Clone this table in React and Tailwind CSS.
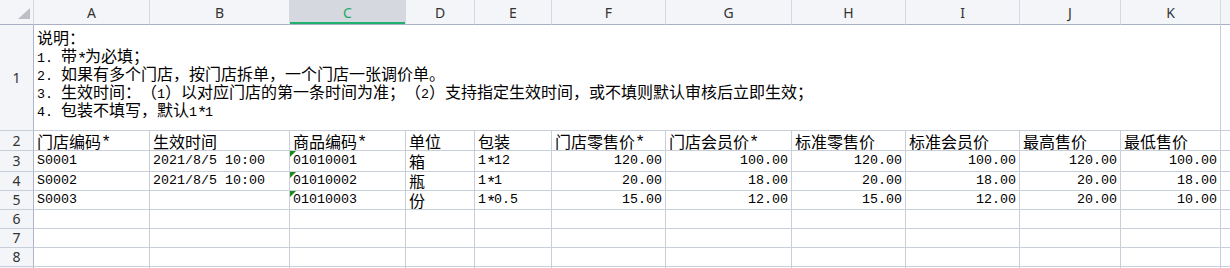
import React from "react";

const cjk = /([\u2E80-\u9FFF\u3000-\u303F\uFF00-\uFFEF]+|\*)/;
const punct = /([\u3000-\u303F\uFF01-\uFF0F\uFF1A-\uFF20\uFF3B-\uFF40\uFF5B-\uFF65])/;
const opening = "（「『【《“‘［｛";

// SimSun-like mix: half-width latin, full-width CJK and punctuation
const Cjk = ({ s }) =>
  s.split(punct).map((p, i) =>
    i % 2 === 1 ? (
      <span
        key={i}
        className={`inline-block w-[16px] ${opening.includes(p) ? "text-right" : "text-left"}`}
      >
        {p}
      </span>
    ) : (
      p
    )
  );

const Txt = ({ s }) =>
  s.split(cjk).map((part, i) => {
    if (i % 2 === 0) return part;
    if (part === "*") {
      return (
        <span key={i} className="inline-block w-[8px] text-[17px] leading-none relative top-[2px]">
          *
        </span>
      );
    }
    return (
      <span key={i} className="text-[16px] font-['Noto_Sans_CJK_SC',sans-serif]">
        <Cjk s={part} />
      </span>
    );
  });

const cols = ["A", "B", "C", "D", "E", "F", "G", "H", "I", "J", "K"];

const heads = [
  { t: "门店编码*", red: true },
  { t: "生效时间" },
  { t: "商品编码*", red: true },
  { t: "单位" },
  { t: "包装" },
  { t: "门店零售价*", red: true },
  { t: "门店会员价*", red: true },
  { t: "标准零售价" },
  { t: "标准会员价" },
  { t: "最高售价" },
  { t: "最低售价" },
];

const rows = [
  ["S0001", "2021/8/5 10:00", "01010001", "箱", "1*12", "120.00", "100.00", "120.00", "100.00", "120.00", "100.00"],
  ["S0002", "2021/8/5 10:00", "01010002", "瓶", "1*1", "20.00", "18.00", "20.00", "18.00", "20.00", "18.00"],
  ["S0003", "", "01010003", "份", "1*0.5", "15.00", "12.00", "15.00", "12.00", "20.00", "10.00"],
];

const notes = [
  "说明：",
  "1. 带*为必填；",
  "2. 如果有多个门店，按门店拆单，一个门店一张调价单。",
  "3. 生效时间：（1）以对应门店的第一条时间为准；（2）支持指定生效时间，或不填则默认审核后立即生效；",
  "4. 包装不填写，默认1*1",
];

const rowHeights = ["h-[20px]", "h-[21px]", "h-[19px]", "h-[19px]", "h-[19px]", "h-[19px]", "h-[19px]"];

const cell =
  "border-r border-b border-[#c9cedb] flex items-center overflow-hidden whitespace-nowrap px-[3px] font-['Liberation_Mono',monospace] text-[13.33px] leading-[18px] text-black";

const RowHead = ({ n, h }) => (
  <div
    className={`${h} bg-[#f4f5f8] border-r border-r-[#aeb5c8] border-b border-b-[#c9cedb] flex items-center justify-center text-[14px] leading-[18px] text-[#333] font-['Noto_Sans',sans-serif]`}
  >
    {n}
  </div>
);

export default function App() {
  return (
    <div className="w-[1230px] h-[268px] overflow-hidden bg-white">
      <div className="grid grid-cols-[34px_116px_140px_116px_69px_77px_114px_126px_114px_114px_101px_100px_1fr]">
        {/* column headers */}
        <div className="relative h-[25px] bg-[#f4f5f8] border-r border-r-[#d6d9e1] border-b border-b-[#a9b0c5]">
          <svg className="absolute left-[18px] top-[8px]" width="12" height="11" viewBox="0 0 12 11">
            <polygon points="12,0 12,11 0,11" fill="#bcbfc6" />
          </svg>
        </div>
        {cols.map((c) => (
          <div
            key={c}
            className={`relative h-[25px] border-r border-r-[#d6d9e1] border-b border-b-[#a9b0c5] flex items-center justify-center text-[14px] font-['Noto_Sans',sans-serif] ${
              c === "C" ? "bg-[#d5d8df] text-[#1fa866]" : "bg-[#f4f5f8] text-[#333]"
            }`}
          >
            {c}
            {c === "C" && <div className="absolute left-0 right-0 bottom-0 h-[2px] bg-[#21b06d]" />}
          </div>
        ))}
        <div className="h-[25px] bg-[#f4f5f8] border-b border-b-[#a9b0c5]" />

        {/* row 1: notes */}
        <RowHead n="1" h="h-[106px]" />
        <div className="col-span-11 h-[106px] border-r border-b border-[#c9cedb] pt-[3px] px-[3px] overflow-hidden whitespace-nowrap font-['Liberation_Mono',monospace] text-[13.33px] leading-[18px] text-black">
          {notes.map((l) => (
            <div key={l} className="h-[18px]">
              <Txt s={l} />
            </div>
          ))}
        </div>
        <div className="h-[106px] border-b border-[#c9cedb]" />

        {/* row 2: field names */}
        <RowHead n="2" h={rowHeights[0]} />
        {heads.map((h) => (
          <div key={h.t} className={`${cell} ${rowHeights[0]} ${h.red ? "text-[#ff0000]" : ""}`}>
            <Txt s={h.t} />
          </div>
        ))}
        <div className={`${rowHeights[0]} border-b border-[#c9cedb]`} />

        {/* data rows */}
        {rows.map((r, ri) => (
          <React.Fragment key={ri}>
            <RowHead n={ri + 3} h={rowHeights[ri + 1]} />
            {r.map((v, ci) => (
              <div
                key={ci}
                className={`${cell} ${rowHeights[ri + 1]} relative ${ci >= 5 ? "justify-end" : ""}`}
              >
                {ci === 2 && (
                  <svg className="absolute left-0 top-0" width="6" height="6" viewBox="0 0 6 6">
                    <polygon points="0,0 6,0 0,6" fill="#1b8a1b" />
                  </svg>
                )}
                <Txt s={v} />
              </div>
            ))}
            <div className={`${rowHeights[ri + 1]} border-b border-[#c9cedb]`} />
          </React.Fragment>
        ))}

        {/* empty rows */}
        {[6, 7, 8, 9].map((n, i) => (
          <React.Fragment key={n}>
            <RowHead n={n} h={rowHeights[4 + Math.min(i, 2)]} />
            {cols.map((c) => (
              <div key={c} className={`${cell} ${rowHeights[4 + Math.min(i, 2)]}`} />
            ))}
            <div className={`${rowHeights[4 + Math.min(i, 2)]} border-b border-[#c9cedb]`} />
          </React.Fragment>
        ))}
      </div>
    </div>
  );
}
